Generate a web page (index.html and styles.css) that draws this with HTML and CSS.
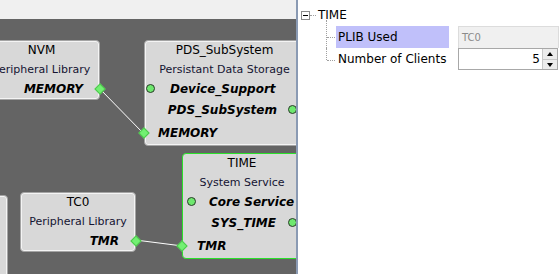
FILE: index.html
```html
<!DOCTYPE html>
<html>
<head>
<meta charset="utf-8">
<link rel="stylesheet" href="styles.css">
</head>
<body>
<div class="app">
  <div class="left">
    <div class="strip"></div>
    <div class="canvas">
      <svg class="wires" width="296" height="255" viewBox="0 0 296 255">
        <line x1="99.5" y1="69.5" x2="143.5" y2="114.5"/>
        <line x1="135.5" y1="221" x2="182.5" y2="227"/>
      </svg>
      <div class="node stub"></div>
      <div class="node nvm">
        <div class="t">NVM</div>
        <div class="s">Peripheral Library</div>
        <div class="p p1 right"><span>MEMORY</span><i class="dia dia-r"></i></div>
      </div>
      <div class="node pds">
        <div class="t">PDS_SubSystem</div>
        <div class="s">Persistant Data Storage</div>
        <div class="p p1 pl"><i class="dot"></i><span>Device_Support</span></div>
        <div class="p p2 pr"><span>PDS_SubSystem</span><i class="dot"></i></div>
        <div class="p p3 pm"><i class="dia dia-l"></i><span>MEMORY</span></div>
      </div>
      <div class="node tc0">
        <div class="t">TC0</div>
        <div class="s">Peripheral Library</div>
        <div class="p p1 right"><span>TMR</span><i class="dia dia-r"></i></div>
      </div>
      <div class="node time">
        <div class="t">TIME</div>
        <div class="s">System Service</div>
        <div class="p p1 pl"><i class="dot"></i><span>Core Service</span></div>
        <div class="p p2 pr"><span>SYS_TIME</span><i class="dot"></i></div>
        <div class="p p3 pm"><i class="dia dia-l"></i><span>TMR</span></div>
      </div>
    </div>
  </div>
  <div class="divider"></div>
  <div class="panel">
    <div class="root">
      <span class="toggle"></span><span class="hdots"></span><span class="root-label">TIME</span>
    </div>
    <div class="prop">
      <div class="indent first"></div>
      <div class="label sel">PLIB Used</div>
      <div class="field ro">TC0</div>
    </div>
    <div class="prop">
      <div class="indent last"></div>
      <div class="label">Number of Clients</div>
      <div class="field spin">
        <span class="num">5</span>
        <span class="btns"><span class="up"></span><span class="down"></span></span>
      </div>
    </div>
  </div>
</div>
</body>
</html>
```
FILE: styles.css
```css
* { box-sizing: border-box; }
html, body { margin: 0; padding: 0; }
body {
  width: 559px;
  height: 274px;
  overflow: hidden;
  font-family: "DejaVu Sans", Verdana, sans-serif;
  background: #ffffff;
}
.app { display: flex; height: 274px; }
.left { width: 296px; display: flex; flex-direction: column; }
.strip { height: 19px; background: #f0f0f0; }
.canvas {
  flex: 1;
  position: relative;
  overflow: hidden;
  background: #646464;
}
.wires { position: absolute; left: 0; top: 0; z-index: 2; }
.wires line { stroke: #ffffff; stroke-width: 1; }
.divider { width: 2px; background: #8a9ab3; }
.panel { flex: 1; background: #ffffff; padding-top: 4px; font-size: 12px; color: #000; }

/* nodes */
.node {
  position: absolute;
  background: #d8d8d8;
  border: 1px solid #a4a4a4;
  border-radius: 4px;
  box-shadow: inset 0 0 0 1px #f4f4f4;
  display: flex;
  flex-direction: column;
  color: #000;
}
.node.time { border-color: #2be02b; box-shadow: none; }
.stub { left: -60px; top: 176px; width: 68px; height: 100px; }
.nvm { left: -17px; top: 21px; width: 117px; height: 60px; }
.pds { left: 144px; top: 21px; width: 161px; height: 106px; }
.tc0 { left: 20px; top: 173px; width: 116px; height: 60px; }
.time { left: 182px; top: 134px; width: 120px; height: 106px; }

.t { height: 19px; line-height: 19px; text-align: center; font-size: 12px; white-space: nowrap; }
.s { height: 19px; line-height: 19px; text-align: center; font-size: 11px; color: #141432; white-space: nowrap; }
.p {
  position: relative;
  display: flex;
  align-items: center;
  font-size: 12px;
  font-weight: bold;
  font-style: italic;
  white-space: nowrap;
}
.p1 { height: 19px; }
.p2 { height: 23px; }
.p3 { height: 24px; }
.right { justify-content: flex-end; padding-right: 16px; }
.pds .pl { padding-left: 1px; gap: 15px; }
.time .pl { padding-left: 4px; gap: 13px; }
.pds .pr { justify-content: flex-end; padding-right: 7px; gap: 11px; }
.time .pr { justify-content: flex-end; padding-right: 4px; gap: 12px; }
.pds .pm { padding-left: 13px; }
.time .pm { padding-left: 14px; }

.dot {
  width: 9px; height: 9px;
  border-radius: 50%;
  background: #6ee86e;
  border: 1px solid #2a3a2a;
  flex: none;
}
.dia {
  position: absolute;
  top: 50%;
  width: 8px; height: 8px;
  background: #72f072;
  border: 1px solid #4cc84c;
  z-index: 3;
}
.dia-r { right: -1px; transform: translate(50%, -50%) rotate(45deg); }
.dia-l { left: -1px; transform: translate(-50%, -50%) rotate(45deg); }

/* property tree */
.root { height: 22px; display: flex; align-items: center; padding-left: 3px; }
.toggle {
  position: relative;
  width: 9px; height: 9px;
  border: 1px solid #8c8c8c;
  background: #fff;
  flex: none;
}
.toggle::after {
  content: "";
  position: absolute;
  left: 1px; top: 3px;
  width: 5px; height: 1px;
  background: #000;
}
.hdots { width: 6px; border-top: 1px dotted #a0a0a0; margin: 0 1px 0 0; }
.root-label { margin-left: 1px; }
.prop { height: 22px; display: flex; align-items: stretch; }
.indent { width: 38px; position: relative; flex: none; }
.indent::before {
  content: "";
  position: absolute;
  left: 28px;
  border-left: 1px dotted #a0a0a0;
}
.indent::after {
  content: "";
  position: absolute;
  left: 29px;
  width: 8px;
  border-top: 1px dotted #a0a0a0;
}
.indent.first::before { top: -6px; bottom: 0; }
.indent.first::after { top: 11px; }
.indent.last::before { top: 0; height: 12px; }
.indent.last::after { top: 12px; }
.label { width: 113px; padding-left: 2px; display: flex; align-items: center; white-space: nowrap; }
.label.sel { background: #c0c0fa; }
.field { width: 101px; margin-left: 9px; display: flex; align-items: center; }
.field.ro {
  background: #f0f0f0;
  border: 1px solid #dcdcdc;
  border-bottom: none;
  color: #8a8a8a;
  font-size: 10px;
  padding-left: 3px;
}
.field.spin {
  background: #fff;
  border: 1px solid #a8a8a8;
  width: 100px;
}
.num { flex: 1; text-align: right; padding-right: 2px; }
.btns {
  width: 15px;
  align-self: stretch;
  display: flex;
  flex-direction: column;
  border-left: 1px solid #c8c8c8;
}
.btns span {
  flex: 1;
  background: #ececec;
  position: relative;
}
.btns .up { border-bottom: 1px solid #c8c8c8; }
.btns span::after {
  content: "";
  position: absolute;
  left: 4px;
  width: 0; height: 0;
  border-left: 3px solid transparent;
  border-right: 3px solid transparent;
}
.btns .up::after { top: 3px; border-bottom: 4px solid #000; }
.btns .down::after { top: 3px; border-top: 4px solid #000; }
```
